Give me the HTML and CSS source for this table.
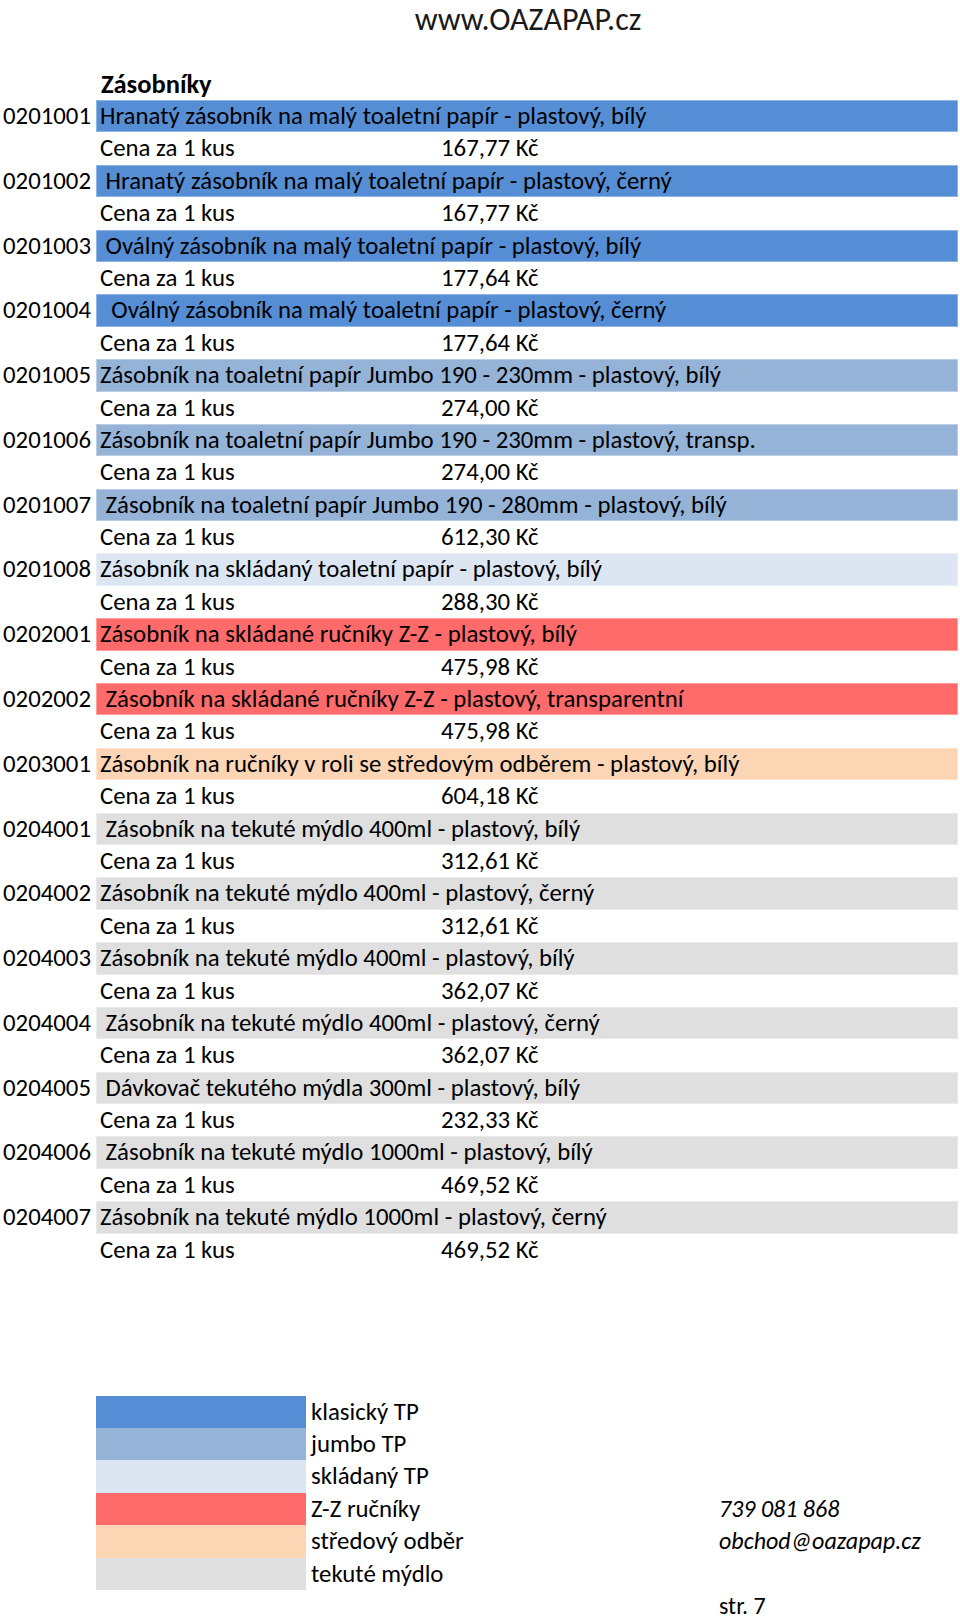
FILE: index.html
```html
<!DOCTYPE html>
<html lang="cs">
<head>
<meta charset="utf-8">
<title>Zásobníky – www.OAZAPAP.cz</title>
<link rel="stylesheet" href="styles.css">
</head>
<body>
<header class="site">www.OAZAPAP.cz</header>

<main class="sheet">
  <div class="row title"><span class="code"></span><span class="name">Zásobníky</span></div>

  <div class="row band classic"><span class="code">0201001</span><span class="name">Hranatý zásobník na malý toaletní papír - plastový, bílý</span></div>
  <div class="row"><span class="code"></span><span class="label">Cena za 1 kus</span><span class="price">167,77 Kč</span></div>

  <div class="row band classic"><span class="code">0201002</span><span class="name"> Hranatý zásobník na malý toaletní papír - plastový, černý</span></div>
  <div class="row"><span class="code"></span><span class="label">Cena za 1 kus</span><span class="price">167,77 Kč</span></div>

  <div class="row band classic"><span class="code">0201003</span><span class="name"> Oválný zásobník na malý toaletní papír - plastový, bílý</span></div>
  <div class="row"><span class="code"></span><span class="label">Cena za 1 kus</span><span class="price">177,64 Kč</span></div>

  <div class="row band classic"><span class="code">0201004</span><span class="name">  Oválný zásobník na malý toaletní papír - plastový, černý</span></div>
  <div class="row"><span class="code"></span><span class="label">Cena za 1 kus</span><span class="price">177,64 Kč</span></div>

  <div class="row band jumbo"><span class="code">0201005</span><span class="name">Zásobník na toaletní papír Jumbo 190 - 230mm - plastový, bílý</span></div>
  <div class="row"><span class="code"></span><span class="label">Cena za 1 kus</span><span class="price">274,00 Kč</span></div>

  <div class="row band jumbo"><span class="code">0201006</span><span class="name">Zásobník na toaletní papír Jumbo 190 - 230mm - plastový, transp.</span></div>
  <div class="row"><span class="code"></span><span class="label">Cena za 1 kus</span><span class="price">274,00 Kč</span></div>

  <div class="row band jumbo"><span class="code">0201007</span><span class="name"> Zásobník na toaletní papír Jumbo 190 - 280mm - plastový, bílý</span></div>
  <div class="row"><span class="code"></span><span class="label">Cena za 1 kus</span><span class="price">612,30 Kč</span></div>

  <div class="row band folded"><span class="code">0201008</span><span class="name">Zásobník na skládaný toaletní papír - plastový, bílý</span></div>
  <div class="row"><span class="code"></span><span class="label">Cena za 1 kus</span><span class="price">288,30 Kč</span></div>

  <div class="row band towels"><span class="code">0202001</span><span class="name">Zásobník na skládané ručníky Z-Z - plastový, bílý</span></div>
  <div class="row"><span class="code"></span><span class="label">Cena za 1 kus</span><span class="price">475,98 Kč</span></div>

  <div class="row band towels"><span class="code">0202002</span><span class="name"> Zásobník na skládané ručníky Z-Z - plastový, transparentní</span></div>
  <div class="row"><span class="code"></span><span class="label">Cena za 1 kus</span><span class="price">475,98 Kč</span></div>

  <div class="row band center"><span class="code">0203001</span><span class="name">Zásobník na ručníky v roli se středovým odběrem - plastový, bílý</span></div>
  <div class="row"><span class="code"></span><span class="label">Cena za 1 kus</span><span class="price">604,18 Kč</span></div>

  <div class="row band soap"><span class="code">0204001</span><span class="name"> Zásobník na tekuté mýdlo 400ml - plastový, bílý</span></div>
  <div class="row"><span class="code"></span><span class="label">Cena za 1 kus</span><span class="price">312,61 Kč</span></div>

  <div class="row band soap"><span class="code">0204002</span><span class="name">Zásobník na tekuté mýdlo 400ml - plastový, černý</span></div>
  <div class="row"><span class="code"></span><span class="label">Cena za 1 kus</span><span class="price">312,61 Kč</span></div>

  <div class="row band soap"><span class="code">0204003</span><span class="name">Zásobník na tekuté mýdlo 400ml - plastový, bílý</span></div>
  <div class="row"><span class="code"></span><span class="label">Cena za 1 kus</span><span class="price">362,07 Kč</span></div>

  <div class="row band soap"><span class="code">0204004</span><span class="name"> Zásobník na tekuté mýdlo 400ml - plastový, černý</span></div>
  <div class="row"><span class="code"></span><span class="label">Cena za 1 kus</span><span class="price">362,07 Kč</span></div>

  <div class="row band soap"><span class="code">0204005</span><span class="name"> Dávkovač tekutého mýdla 300ml - plastový, bílý</span></div>
  <div class="row"><span class="code"></span><span class="label">Cena za 1 kus</span><span class="price">232,33 Kč</span></div>

  <div class="row band soap"><span class="code">0204006</span><span class="name"> Zásobník na tekuté mýdlo 1000ml - plastový, bílý</span></div>
  <div class="row"><span class="code"></span><span class="label">Cena za 1 kus</span><span class="price">469,52 Kč</span></div>

  <div class="row band soap"><span class="code">0204007</span><span class="name">Zásobník na tekuté mýdlo 1000ml - plastový, černý</span></div>
  <div class="row"><span class="code"></span><span class="label">Cena za 1 kus</span><span class="price">469,52 Kč</span></div>
</main>

<section class="legend">
  <span class="swatch classic"></span><span class="legend-label">klasický TP</span><span class="contact"></span>
  <span class="swatch jumbo"></span><span class="legend-label">jumbo TP</span><span class="contact"></span>
  <span class="swatch folded"></span><span class="legend-label">skládaný TP</span><span class="contact"></span>
  <span class="swatch towels"></span><span class="legend-label">Z-Z ručníky</span><span class="contact italic">739 081 868</span>
  <span class="swatch center"></span><span class="legend-label">středový odběr</span><span class="contact italic">obchod@oazapap.cz</span>
  <span class="swatch soap"></span><span class="legend-label">tekuté mýdlo</span><span class="contact"></span>
  <span class="blank"></span><span class="blank"></span><span class="contact">str. 7</span>
</section>
</body>
</html>
```

FILE: styles.css
```css
* { box-sizing: border-box; }

html, body {
  margin: 0;
  padding: 0;
  background: #ffffff;
}

body {
  width: 960px;
  font-family: Carlito, Calibri, "Lato", "Open Sans", sans-serif;
  font-size: 24.8px;
  color: #000000;
}

.site {
  height: 67.6px;
  padding-left: 96px;
  text-align: center;
  font-size: 32px;
  line-height: normal;
  color: #1a1a1a;
}

.sheet {
  display: flex;
  flex-direction: column;
}

.row {
  display: grid;
  grid-template-columns: 96px 345px 96px 1fr;
  height: 32.4px;
  line-height: 32.4px;
  white-space: pre;
}

.code {
  padding-left: 3px;
  background: #ffffff;
}

.name {
  grid-column: 2 / 5;
  overflow: visible;
  padding-left: 4px;
  margin-right: 2px;
}

.title .name {
  font-weight: bold;
  font-size: 26.5px;
  padding-left: 5px;
}

.label {
  padding-left: 4px;
}

.price {
  text-align: right;
}

.band .name { box-shadow: inset 0 0 0 1px rgba(255, 255, 255, 0.35); }

.classic .name, .swatch.classic { background: #558ed5; }
.jumbo .name, .swatch.jumbo { background: #95b3d7; }
.folded .name, .swatch.folded { background: #dce6f2; }
.towels .name, .swatch.towels { background: #ff6a6a; }
.center .name, .swatch.center { background: #fcd5b5; }
.soap .name, .swatch.soap { background: #dfdfdf; }

.legend {
  display: grid;
  grid-template-columns: 210px 413px 1fr;
  grid-auto-rows: 32.4px;
  margin-top: 129.6px;
  margin-left: 96px;
  line-height: 32.4px;
}

.legend-label {
  padding-left: 5px;
}

.contact {
  white-space: nowrap;
  font-size: 24px;
}

.italic {
  font-style: italic;
}
```
